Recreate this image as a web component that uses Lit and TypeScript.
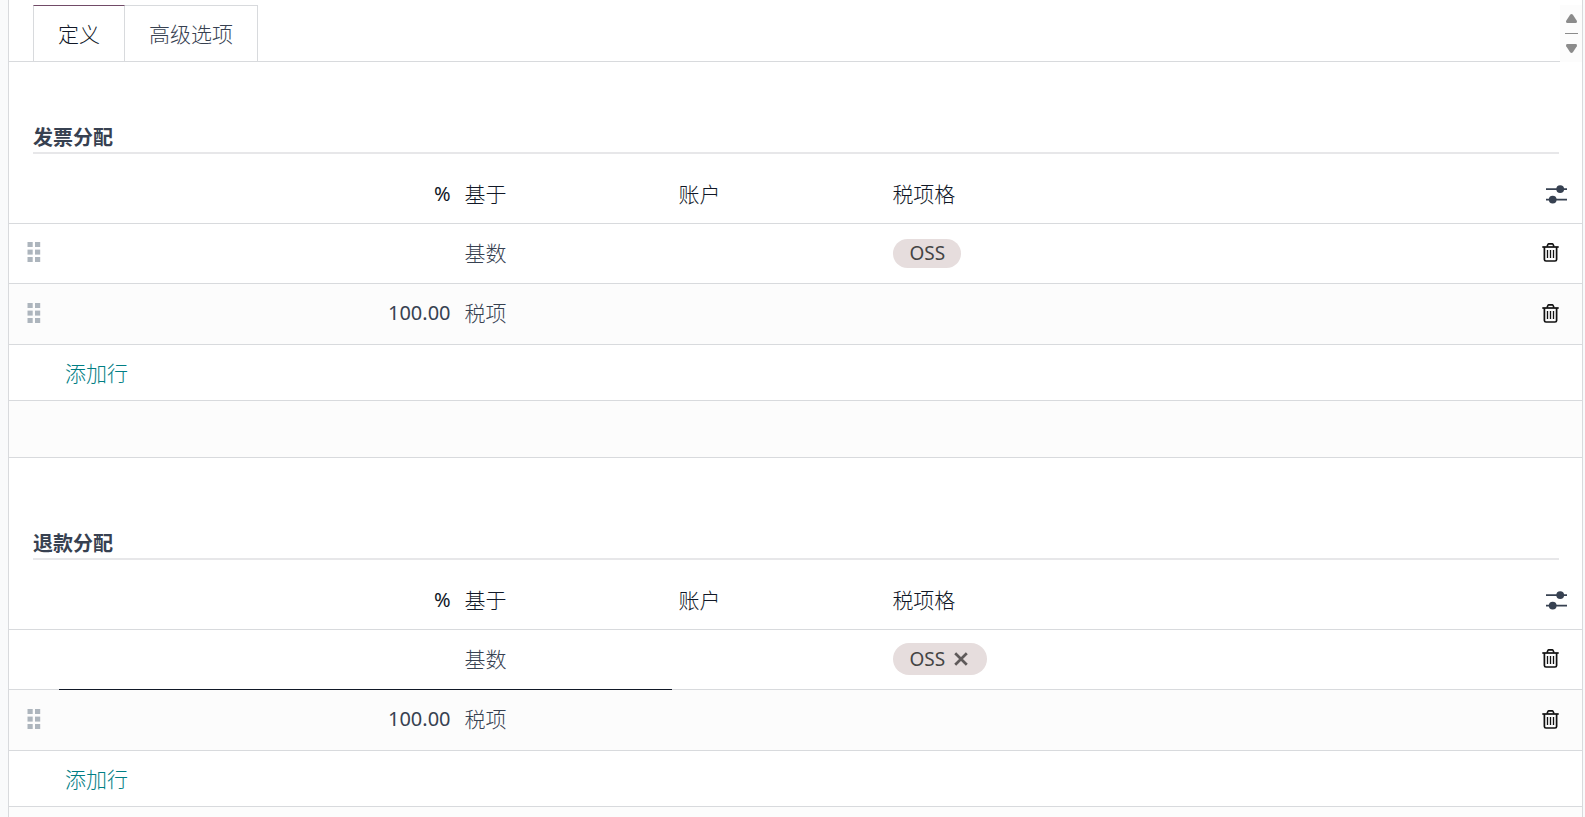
import { LitElement, html, css, svg, nothing } from "lit";
import { customElement, property, state } from "lit/decorators.js";

interface Line {
  percent: string;
  base: string;
  tag?: string;
  editing?: boolean;
}

const trashIcon = html`<svg width="17" height="19" viewBox="0 0 17 19" fill="none" stroke="#111" aria-hidden="true">
  <path d="M0.3 4H16.7" stroke-width="1.7" />
  <path d="M5 3.6L6 1.3Q6.2 0.9 6.7 0.9H10.3Q10.8 0.9 11 1.3L12 3.6" stroke-width="1.6" />
  <path d="M2.4 4V16.4Q2.4 18 4 18H13Q14.6 18 14.6 16.4V4" stroke-width="1.7" />
  <path d="M5.5 7V15M8.5 7V15M11.5 7V15" stroke-width="1.3" />
</svg>`;

const slidersIcon = html`<svg width="21" height="19" viewBox="0 0 21 19" fill="#374151" aria-hidden="true">
  <path d="M0 3.2H21V5H0zM0 13.7H21V15.5H0z" />
  <circle cx="14.2" cy="4.1" r="3.9" />
  <circle cx="6.7" cy="14.6" r="3.9" />
</svg>`;

const handleIcon = html`<svg width="14" height="20" viewBox="0 0 14 20" fill="#adb5bd" aria-hidden="true">
  ${[0, 7.6, 15].map((y) => [0.5, 8].map((x) => svg`<rect x=${x} y=${y} width="5.2" height="5" />`))}
</svg>`;

const closeIcon = html`<svg width="14" height="14" viewBox="0 0 14 14" stroke="#5f5a5a" stroke-width="2.7" aria-hidden="true">
  <path d="M1.2 1.2L12.8 12.8M12.8 1.2L1.2 12.8" />
</svg>`;

@customElement("distribution-list")
export class DistributionList extends LitElement {
  @property() heading = "";
  @property({ attribute: false }) lines: Line[] = [];

  static styles = css`
    :host {
      display: block;
    }
    h2 {
      margin: 0 23px 11px 24px;
      padding-top: 2px;
      border-bottom: 2px solid #e7e7e9;
      font-size: 20px;
      line-height: 28px;
      font-weight: 700;
      color: #374151;
    }
    table {
      width: 100%;
      table-layout: fixed;
      border-collapse: separate;
      border-spacing: 0;
    }
    .c-handle {
      width: 50px;
    }
    .c-percent {
      width: 25.4%;
    }
    .c-mid {
      width: 13.6%;
    }
    .c-action {
      width: 50px;
    }
    th,
    td {
      box-sizing: border-box;
      height: 60px;
      padding: 0 8px 2px 6px;
      border-bottom: 1px solid #d8dadd;
      text-align: left;
      vertical-align: middle;
      font-weight: 300;
      line-height: 30px;
    }
    th {
      height: 59px;
      padding-bottom: 0;
      color: #111827;
    }
    .even td {
      height: 61px;
      background: #fcfcfc;
    }
    .add td {
      height: 56px;
      padding-bottom: 0;
    }
    .blank td {
      height: 57px;
      background: #fcfcfc;
    }
    th.number,
    td.number {
      text-align: right;
      font-size: 20px;
      font-weight: 400;
    }
    .editing .focus {
      border-bottom-color: #111827;
    }
    input,
    select {
      display: block;
      width: 100%;
      margin: 0;
      padding: 0;
      border: 0;
      background: none;
      outline: none;
      appearance: none;
      font: inherit;
      color: inherit;
    }
    input {
      text-align: right;
    }
    td.handle {
      padding: 1px 0 0 18px;
    }
    td.tags {
      padding-left: 7px;
      padding-bottom: 1px;
    }
    button {
      margin: 0;
      padding: 0;
      border: 0;
      background: none;
      font: inherit;
      cursor: pointer;
    }
    svg {
      display: block;
    }
    .handle button {
      cursor: grab;
    }
    th.action,
    td.action {
      padding: 0 23px 2px 0;
    }
    th.action {
      padding: 0 15px 0 0;
    }
    .action button {
      display: block;
      margin-left: auto;
    }
    .add a {
      color: #017e84;
      text-decoration: none;
    }
    .chip {
      display: flex;
      align-items: center;
      gap: 9px;
      width: fit-content;
      height: 29px;
      padding: 0 16px;
      border-radius: 16px;
      background: #e6dddd;
      color: #444;
      font-size: 19px;
      font-weight: 400;
      line-height: 29px;
    }
    .chip.removable {
      height: 32px;
      padding-right: 19px;
    }
  `;

  private renderLine(line: Line, index: number) {
    return html`<tr class="${index % 2 ? "even" : "odd"} ${line.editing ? "editing" : ""}">
      <td class="handle">
        ${line.editing ? nothing : html`<button type="button" aria-label="拖动">${handleIcon}</button>`}
      </td>
      <td class="number focus">
        ${line.editing ? html`<input type="text" aria-label="%" .value=${line.percent} />` : line.percent}
      </td>
      <td class="focus">
        ${line.editing
          ? html`<select aria-label="基于"><option>${line.base}</option></select>`
          : line.base}
      </td>
      <td></td>
      <td class="tags">
        ${line.tag
          ? html`<span class="chip ${line.editing ? "removable" : ""}"
              >${line.tag}${line.editing
                ? html`<button type="button" aria-label="移除">${closeIcon}</button>`
                : nothing}</span
            >`
          : nothing}
      </td>
      <td class="action"><button type="button" aria-label="删除">${trashIcon}</button></td>
    </tr>`;
  }

  render() {
    return html`
      <h2 id="heading">${this.heading}</h2>
      <table aria-labelledby="heading">
        <colgroup>
          <col class="c-handle" />
          <col class="c-percent" />
          <col class="c-mid" />
          <col class="c-mid" />
          <col />
          <col class="c-action" />
        </colgroup>
        <thead>
          <tr>
            <th></th>
            <th class="number" scope="col">%</th>
            <th scope="col">基于</th>
            <th scope="col">账户</th>
            <th scope="col">税项格</th>
            <th class="action"><button type="button" aria-label="可选列">${slidersIcon}</button></th>
          </tr>
        </thead>
        <tbody>
          ${this.lines.map((line, i) => this.renderLine(line, i))}
          <tr class="add">
            <td></td>
            <td colspan="5"><a href="#">添加行</a></td>
          </tr>
          <tr class="blank">
            <td colspan="6"></td>
          </tr>
        </tbody>
      </table>
    `;
  }
}

@customElement("app-root")
export class AppRoot extends LitElement {
  @state() private active = 0;

  private tabs = ["定义", "高级选项"];
  private invoiceLines: Line[] = [
    { percent: "", base: "基数", tag: "OSS" },
    { percent: "100.00", base: "税项" },
  ];
  private refundLines: Line[] = [
    { percent: "", base: "基数", tag: "OSS", editing: true },
    { percent: "100.00", base: "税项" },
  ];

  static styles = css`
    :host {
      display: block;
      box-sizing: border-box;
      height: 100vh;
      padding: 0 2px 0 8px;
      overflow: auto;
      scrollbar-width: none;
      background: #f9fafb;
      color: #374151;
      font-family: "Noto Sans", "Noto Sans CJK SC", sans-serif;
      font-size: 21px;
      line-height: 30px;
    }
    main {
      box-sizing: border-box;
      min-height: 100%;
      padding-top: 5px;
      border: solid #d8dadd;
      border-width: 0 1px;
      background: #fff;
    }
    .bar {
      display: flex;
    }
    .tabs {
      flex: 1;
      display: flex;
      padding-left: 24px;
      border-bottom: 1px solid #d8dadd;
    }
    .tab {
      box-sizing: border-box;
      height: 56px;
      margin: 0;
      padding: 0 24px;
      border: solid #d8dadd;
      border-width: 1px 1px 0 0;
      background: #fff;
      color: #374151;
      font: inherit;
      font-weight: 300;
      cursor: pointer;
    }
    .tab:first-child {
      border-left-width: 1px;
    }
    .tab.active {
      border-top-color: #714b67;
      color: #111827;
    }
    .stepper {
      display: flex;
      flex-direction: column;
      align-items: center;
      justify-content: center;
      gap: 10px;
      width: 22px;
      background: #fcfcfc;
    }
    .stepper button {
      margin: 0;
      padding: 0;
      border: 0;
      background: none;
    }
    .stepper svg {
      display: block;
    }
    .rule {
      width: 13px;
      height: 1px;
      background: #8b8b8b;
    }
    .invoice {
      margin-top: 60px;
    }
    .refund {
      margin-top: 70px;
    }
  `;

  render() {
    return html`<main>
      <div class="bar">
        <div class="tabs" role="tablist">
          ${this.tabs.map(
            (label, i) => html`<button
              type="button"
              role="tab"
              class="tab ${i === this.active ? "active" : ""}"
              aria-selected=${i === this.active}
              @click=${() => (this.active = i)}
            >
              ${label}
            </button>`
          )}
        </div>
        <div class="stepper">
          <button type="button" aria-label="向上">
            <svg width="11" height="9" viewBox="0 0 11 9" fill="#8b8b8b">
              <path d="M4.1 0.8Q5.5 -0.6 6.9 0.8L10.8 6.8Q11.4 9 9.6 9H1.4Q-0.4 9 0.2 6.8z" />
            </svg>
          </button>
          <div class="rule"></div>
          <button type="button" aria-label="向下">
            <svg width="11" height="9" viewBox="0 0 11 9" fill="#8b8b8b">
              <path d="M4.1 8.2Q5.5 9.6 6.9 8.2L10.8 2.2Q11.4 0 9.6 0H1.4Q-0.4 0 0.2 2.2z" />
            </svg>
          </button>
        </div>
      </div>
      <distribution-list class="invoice" heading="发票分配" .lines=${this.invoiceLines}></distribution-list>
      <distribution-list class="refund" heading="退款分配" .lines=${this.refundLines}></distribution-list>
    </main>`;
  }
}
